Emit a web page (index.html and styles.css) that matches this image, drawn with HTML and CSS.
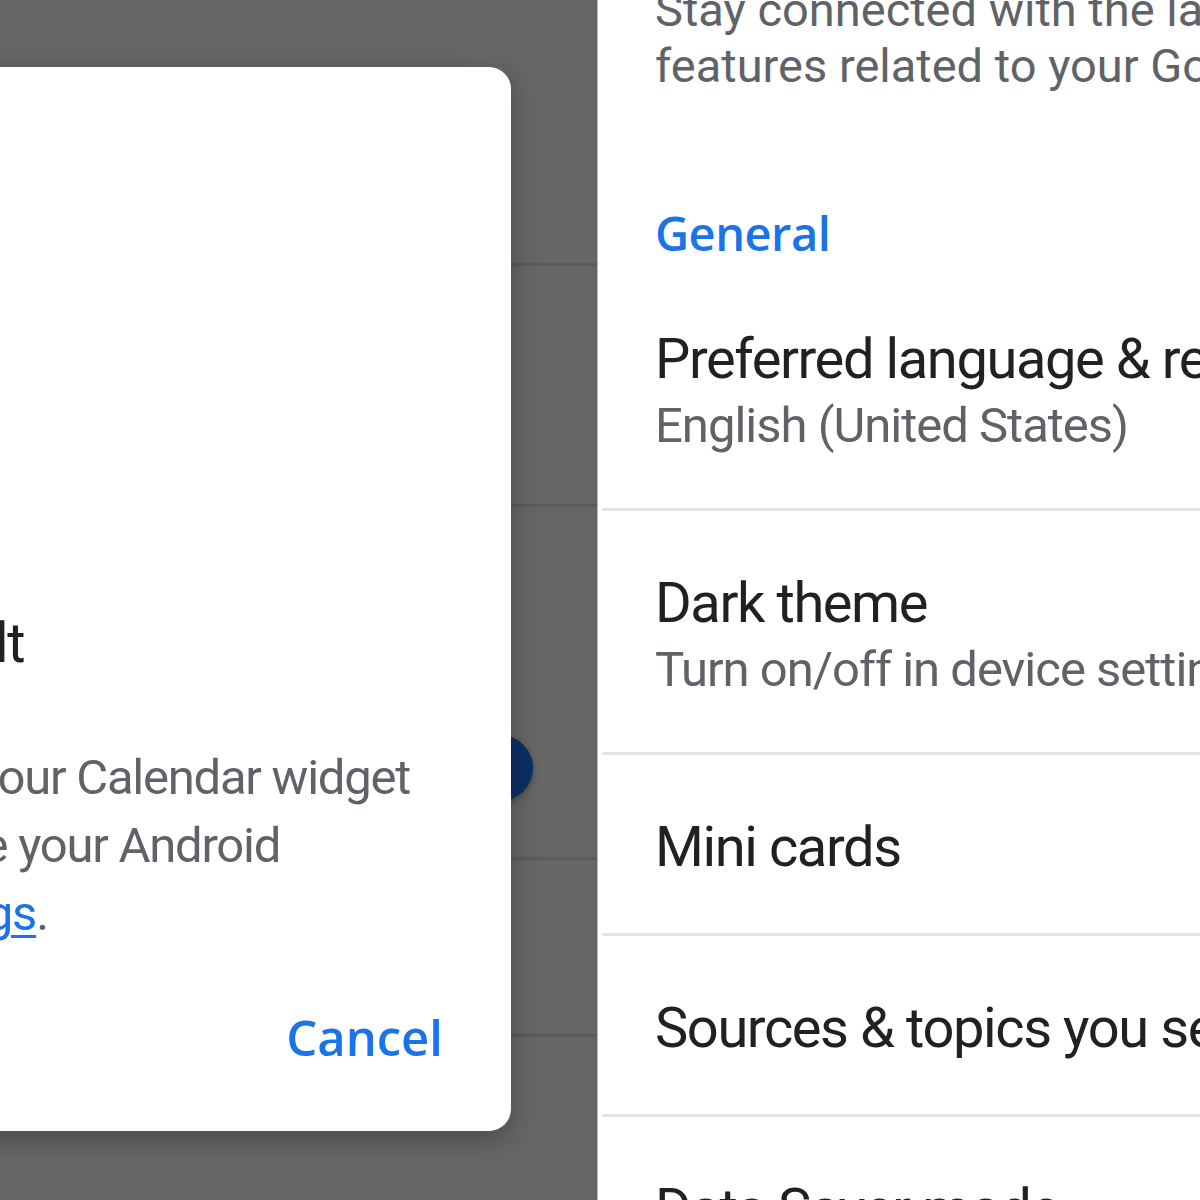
FILE: index.html
```html
<!DOCTYPE html>
<html lang="en">
<head>
<meta charset="utf-8">
<title>Settings</title>
<link rel="stylesheet" href="styles.css">
</head>
<body>
<div class="screen">
  <div class="left">
    <div class="bg-list">
      <div class="bg-row bg-r1"></div>
      <div class="bg-row bg-r2"></div>
      <div class="bg-row bg-r3"></div>
      <div class="bg-row bg-r4"></div>
    </div>
    <div class="fab"></div>
    <div class="dialog" role="dialog">
      <div class="option">System default</div>
      <div class="note">
        <div class="note-line line-1">your Calendar widget</div>
        <div class="note-line line-2">change your Android</div>
        <div class="note-line line-3"><a class="link" href="#">settings</a>.</div>
      </div>
      <div class="actions">
        <button class="btn-text">Cancel</button>
      </div>
    </div>
  </div>
  <div class="right">
    <p class="intro">Stay connected with the latest<br>features related to your Google Account</p>
    <div class="section-head">General</div>
    <div class="item">
      <div class="item-title">Preferred language &amp; region</div>
      <div class="item-sub">English (United States)</div>
    </div>
    <div class="item">
      <div class="item-title">Dark theme</div>
      <div class="item-sub">Turn on/off in device settings</div>
    </div>
    <div class="item">
      <div class="item-title">Mini cards</div>
    </div>
    <div class="item">
      <div class="item-title">Sources &amp; topics you see</div>
    </div>
    <div class="item">
      <div class="item-title">Data Saver mode</div>
    </div>
  </div>
</div>
</body>
</html>
```
FILE: styles.css
```css
html, body {
  margin: 0;
  padding: 0;
}
body {
  width: 1200px;
  height: 1200px;
  overflow: hidden;
  background: #ffffff;
  font-family: Roboto, "Liberation Sans", Arial, sans-serif;
}
.screen {
  display: flex;
  width: 1200px;
  height: 1200px;
  overflow: hidden;
}

/* ---------- left, dimmed screen with dialog ---------- */
.left {
  flex: none;
  width: 597px;
  height: 1200px;
  position: relative;
  overflow: hidden;
  background: #666666;
}
.bg-list {
  display: flex;
  flex-direction: column;
}
.bg-row {
  border-bottom: 3px solid #5b5b5b;
}
.bg-r1 { height: 263px; }
.bg-r2 { height: 238px; }
.bg-r3 { height: 350px; }
.bg-r4 { height: 174px; }

.fab {
  position: absolute;
  left: 467px;
  top: 735px;
  width: 66px;
  height: 66px;
  border-radius: 50%;
  background: #0c2f62;
  box-shadow: 0 3px 6px rgba(0, 0, 0, 0.3);
}

.dialog {
  position: absolute;
  left: -60px;
  top: 67px;
  width: 571px;
  height: 1064px;
  box-sizing: border-box;
  padding: 544px 68px 0 60px;
  background: #ffffff;
  border-radius: 22px;
  box-shadow: 0 8px 28px rgba(0, 0, 0, 0.28);
  display: flex;
  flex-direction: column;
}
.option {
  font-size: 56px;
  line-height: 64px;
  letter-spacing: -1.4px;
  color: #202124;
  white-space: nowrap;
  margin-left: -330px;
}
.note {
  margin-top: 69px;
  font-size: 49px;
  line-height: 68px;
  letter-spacing: -1.25px;
  color: #5f6368;
}
.note-line {
  white-space: nowrap;
}
.line-1 { margin-left: -24px; }
.line-2 { margin-left: -145px; }
.line-3 { margin-left: -129px; }
.link {
  color: #1a73e8;
  text-decoration: underline;
  text-decoration-thickness: 3px;
  text-underline-offset: 5px;
}
.actions {
  display: flex;
  justify-content: flex-end;
  margin-top: 61px;
}
.btn-text {
  border: 0;
  background: transparent;
  padding: 0;
  font-family: "Open Sans", Roboto, sans-serif;
  font-weight: 600;
  font-size: 49px;
  line-height: 56px;
  color: #1a73e8;
}

/* ---------- right, settings list ---------- */
.right {
  flex: none;
  width: 1400px;
  height: 1200px;
  background: #ffffff;
  border-left: 1px solid #b5b5b5;
  overflow: hidden;
}
.intro {
  margin: -18px 0 0 0;
  padding-left: 57px;
  font-size: 47px;
  line-height: 56px;
  color: #5f6368;
  white-space: nowrap;
}
.section-head {
  margin-top: 111px;
  margin-bottom: 6px;
  padding-left: 57px;
  font-family: "Open Sans", Roboto, sans-serif;
  font-weight: 600;
  font-size: 47px;
  line-height: 56px;
  letter-spacing: -0.5px;
  color: #1a73e8;
}
.item {
  margin-left: 4px;
  padding: 60px 0 54px 53px;
  border-bottom: 3px solid #e3e3e3;
}
.item-title {
  font-size: 56px;
  line-height: 64px;
  letter-spacing: -1.4px;
  color: #202124;
  white-space: nowrap;
}
.item-sub {
  margin-top: 7px;
  font-size: 49px;
  line-height: 56px;
  letter-spacing: -1px;
  color: #5f6368;
  white-space: nowrap;
}
```
